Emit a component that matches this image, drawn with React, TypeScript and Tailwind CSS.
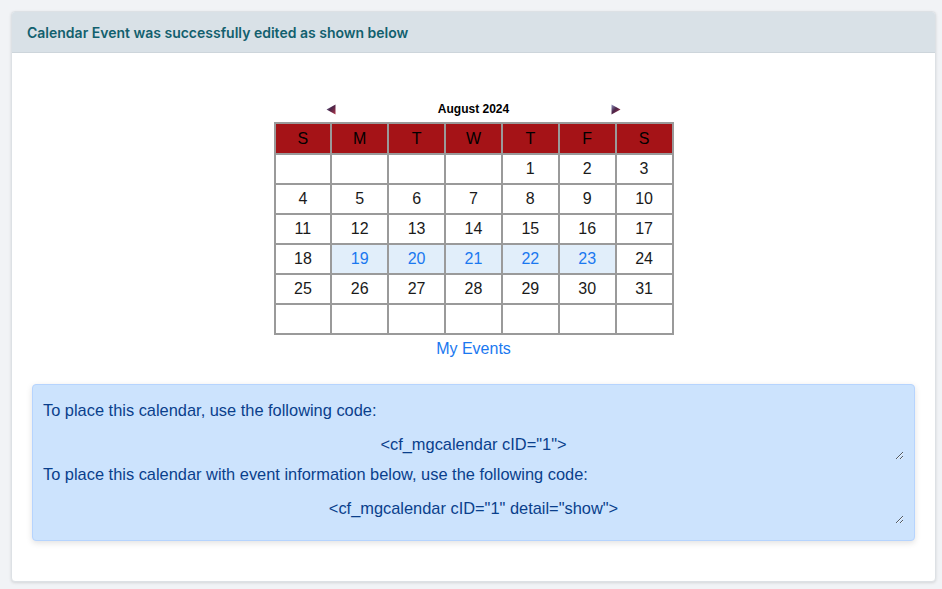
import React from 'react';

const DAYS = ['S', 'M', 'T', 'W', 'T', 'F', 'S'];

const WEEKS: (number | null)[][] = [
  [null, null, null, null, 1, 2, 3],
  [4, 5, 6, 7, 8, 9, 10],
  [11, 12, 13, 14, 15, 16, 17],
  [18, 19, 20, 21, 22, 23, 24],
  [25, 26, 27, 28, 29, 30, 31],
  [null, null, null, null, null, null, null],
];

const EVENT_DAYS = [19, 20, 21, 22, 23];

const Arrow: React.FC<{ dir: 'left' | 'right' }> = ({ dir }) => (
  <svg width="10" height="11" viewBox="0 0 10 11" className="inline-block">
    <defs>
      <linearGradient id={`arr-${dir}`} x1="0" y1="0" x2="1" y2="1">
        <stop offset="0" stopColor="#9096c0" />
        <stop offset="0.45" stopColor="#4a2448" />
        <stop offset="1" stopColor="#b03448" />
      </linearGradient>
    </defs>
    {dir === 'left' ? (
      <polygon points="0.5,5.5 9.5,0.5 9.5,10.5" fill={`url(#arr-${dir})`} />
    ) : (
      <polygon points="9.5,5.5 0.5,0.5 0.5,10.5" fill={`url(#arr-${dir})`} />
    )}
  </svg>
);

const Calendar: React.FC = () => (
  <div className="flex flex-col items-center" style={{ fontFamily: '"Liberation Sans", Arial, sans-serif' }}>
    {/* Month navigation */}
    <div className="grid grid-cols-7 w-[400px] h-[22px] items-center mb-[2px]">
      <div className="col-span-2 flex justify-center">
        <Arrow dir="left" />
      </div>
      <div className="col-span-3 text-center text-[12px] font-bold text-black">August 2024</div>
      <div className="col-span-2 flex justify-center">
        <Arrow dir="right" />
      </div>
    </div>

    {/* Month grid */}
    <table className="w-[400px] border-collapse table-fixed border-2 border-[#9a9a9a]">
      <thead>
        <tr>
          {DAYS.map((d, i) => (
            <th
              key={i}
              className="h-[31px] border-2 border-[#9a9a9a] bg-[#a51317] text-[16px] font-normal text-black text-center p-0"
            >
              {d}
            </th>
          ))}
        </tr>
      </thead>
      <tbody>
        {WEEKS.map((week, wi) => (
          <tr key={wi}>
            {week.map((day, di) => {
              const isEvent = day !== null && EVENT_DAYS.includes(day);
              const isToday = day === 12;
              return (
                <td
                  key={di}
                  className={
                    'h-[30px] border-2 border-[#9a9a9a] text-center text-[16px] p-0 ' +
                    (isEvent ? 'bg-[#e1eefa] text-[#1a78f0] ' : 'bg-white text-[#1a1a1a] ') +
                    (isToday ? 'border-t-[#e8e8e8] border-l-[#d4d4d4]' : '')
                  }
                >
                  {day ?? ''}
                </td>
              );
            })}
          </tr>
        ))}
      </tbody>
    </table>

    <a href="#" className="mt-[2px] text-[16px] leading-6 text-[#1a78f0]">
      My Events
    </a>
  </div>
);

export default function App() {
  return (
    <div
      className="min-h-[589px] bg-[#f1f3f6] p-[11px] pr-[6px]"
      style={{ fontFamily: 'Inter, "Noto Sans", sans-serif' }}
    >
      <div className="rounded-[4px] border border-[#dde1e5] bg-white shadow-[0_1px_3px_rgba(0,0,0,0.12)] overflow-hidden">
        {/* Card header */}
        <div className="h-[41px] bg-[#d9e1e7] border-b border-[#cdd5db] px-[15px] flex items-center">
          <h2 className="text-[14px] font-semibold text-[#12606e]">
            Calendar Event was successfully edited as shown below
          </h2>
        </div>

        {/* Card body */}
        <div className="px-5 pt-[45px] pb-[40px]">
          <Calendar />

          <div
            className="mt-[23px] rounded-[4px] border border-[#b6d4fe] bg-[#cce3fd] px-[10px] pt-[13px] pb-[16px] text-[16.4px] leading-6 text-[#0a3f8c] shadow-[0_2px_6px_rgba(0,0,0,0.12)]"
            style={{ fontFamily: '"Liberation Sans", Arial, sans-serif' }}
          >
            <p>To place this calendar, use the following code:</p>
            <textarea
              readOnly
              rows={1}
              className="block w-full h-[38px] pt-[10px] bg-transparent text-center text-[#0a3f8c] outline-none resize-y"
              defaultValue={'<cf_mgcalendar cID="1">'}
            />
            <p className="mt-[2px]">To place this calendar with event information below, use the following code:</p>
            <textarea
              readOnly
              rows={1}
              className="block w-full h-[38px] pt-[10px] bg-transparent text-center text-[#0a3f8c] outline-none resize-y"
              defaultValue={'<cf_mgcalendar cID="1" detail="show">'}
            />
          </div>
        </div>
      </div>
    </div>
  );
}
